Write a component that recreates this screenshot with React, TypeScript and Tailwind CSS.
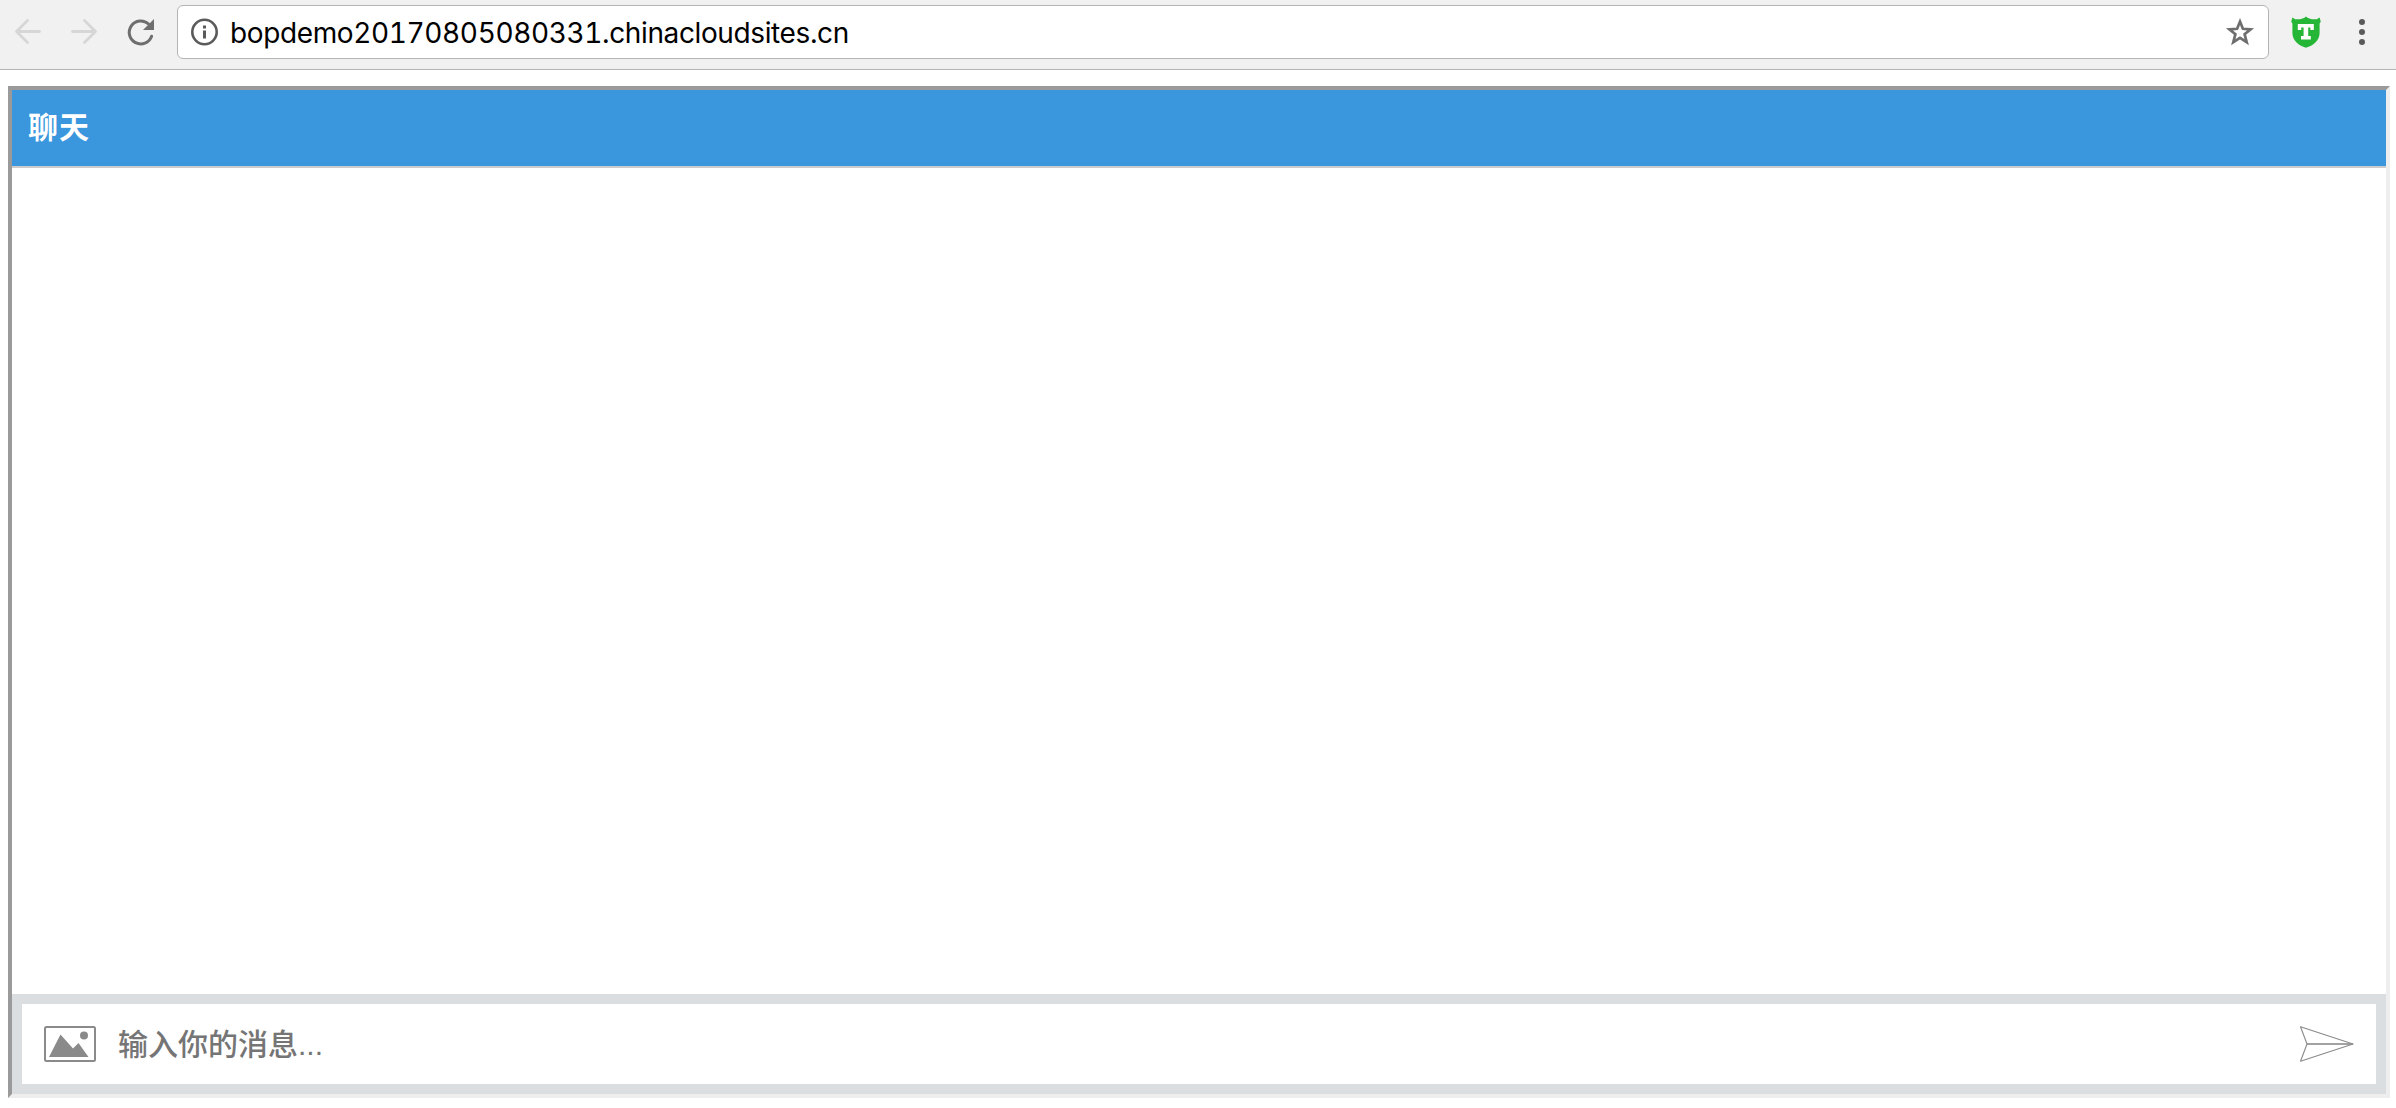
import { useState } from 'react';

const HOST = 'bopdemo20170805080331.chinacloudsites.cn';

export default function App() {
  return (
    <div className="flex h-[1108px] w-[2396px] flex-col overflow-hidden bg-white">
      <BrowserBar />
      <div className="flex flex-1 pt-4 pr-1.5 pb-2.5 pl-2">
        <ChatFrame />
      </div>
    </div>
  );
}

function BrowserBar() {
  return (
    <div className="flex h-[70px] shrink-0 items-start border-b border-[#b4b4b4] bg-[#f1f1f1]">
      <div className="flex w-[177px] shrink-0 pt-[17px] pl-[13px]">
        <ArrowIcon />
        <ArrowIcon className="ml-[30px] -scale-x-100" />
        <ReloadIcon />
      </div>

      {/* Address field */}
      <div className="mt-[5px] flex h-[54px] w-[2092px] items-center rounded-[6px] border border-[#b4b4b4] bg-white pr-[13px] pl-[13px]">
        <InfoIcon />
        <span className="ml-[11px] pt-0.5 font-['Inter',sans-serif] text-[28px] leading-[34px] tracking-[-0.38px] whitespace-nowrap text-black tabular-nums">
          {HOST}
        </span>
        <StarIcon />
      </div>

      <ShieldIcon />
      <svg className="mt-[17px] ml-[35px] h-[30px] w-3" viewBox="0 0 12 30" fill="#5a5a5a">
        <circle cx="6" cy="5" r="3" />
        <circle cx="6" cy="15" r="3" />
        <circle cx="6" cy="25" r="3" />
      </svg>
    </div>
  );
}

function ChatFrame() {
  const [message, setMessage] = useState('');

  return (
    <div className="flex flex-1 flex-col border-4 border-t-[#9a9a9a] border-r-[#eeeeee] border-b-[#eeeeee] border-l-[#9a9a9a] font-['Liberation_Sans','Noto_Sans_CJK_SC',sans-serif]">
      <header className="flex h-[78px] shrink-0 items-center border-b-2 border-[#cccccc] bg-[#3a96dd] pl-4">
        <h1 className="text-[30px] leading-[40px] font-bold tracking-[1px] text-white">聊天</h1>
      </header>

      {/* Message history */}
      <main className="flex-1 bg-white" />

      <footer className="flex h-[100px] shrink-0 items-center border-[10px] border-[#dbdee1] bg-white pr-[21px] pl-[22px]">
        <ImageIcon />
        <input
          className="ml-[22px] h-[60px] flex-1 bg-transparent pt-0.5 text-[30px] font-medium text-[#757575] outline-none placeholder:text-[#757575]"
          placeholder="输入你的消息..."
          value={message}
          onChange={(e) => setMessage(e.target.value)}
        />
        <SendIcon />
      </footer>
    </div>
  );
}

function ArrowIcon({ className = '' }: { className?: string }) {
  return (
    <svg
      className={`h-[30px] w-7 shrink-0 ${className}`}
      viewBox="0 0 28 30"
      fill="none"
      stroke="#d6d6d6"
      strokeWidth="2.8"
      strokeLinecap="round"
      strokeLinejoin="round"
    >
      <path d="M26.5 14.5H4M14.5 3.5L3.5 14.5L14.5 25.5" />
    </svg>
  );
}

function ReloadIcon() {
  return (
    <svg className="ml-[27px] h-[30px] w-[30px] shrink-0" viewBox="0 0 30 30">
      <path
        d="M25.6 19.2A11.5 11.5 0 1 1 22.6 7"
        fill="none"
        stroke="#6e6e6e"
        strokeWidth="3"
        strokeLinecap="round"
      />
      <path d="M28 2V13H17Z" fill="#6e6e6e" />
    </svg>
  );
}

function InfoIcon() {
  return (
    <svg className="h-7 w-7 shrink-0" viewBox="0 0 28 28">
      <circle cx="13.5" cy="14" r="12.2" fill="none" stroke="#5a5a5a" strokeWidth="2.6" />
      <path d="M12 7.5h3v3h-3zM12 12.5h3v8h-3z" fill="#5a5a5a" />
    </svg>
  );
}

function StarIcon() {
  return (
    <svg className="ml-auto h-[30px] w-[30px] shrink-0" viewBox="0 0 30 30">
      <path
        d="M15 4.6L17.9 11.8L25.6 12.3L19.6 17.2L21.7 25.2L15 20.8L8.3 25.2L10.4 17.2L4.4 12.3L12.1 11.8Z"
        fill="none"
        stroke="#6e6e6e"
        strokeWidth="2.7"
      />
    </svg>
  );
}

function ShieldIcon() {
  return (
    <svg className="mt-4 ml-[22px] h-8 w-[30px] shrink-0" viewBox="0 0 30 32">
      <path
        d="M15 .5C17 2.8 21 3.6 25.8 3.2L28.6 1.6L29.8 5.8L28.6 7.5V17C28.6 25 22 29.5 15 31.8C8 29.5 1.4 25 1.4 17V7.5L.2 5.8L1.4 1.6L4.2 3.2C9 3.6 13 2.8 15 .5Z"
        fill="#26b637"
      />
      <path d="M6.8 8H22.8V14H19.4V11.6H17.2V20H19.8V23.6H10V20H12.6V11.6H10.2V14H6.8Z" fill="#fff" />
    </svg>
  );
}

function ImageIcon() {
  return (
    <svg className="h-9 w-[52px] shrink-0" viewBox="0 0 52 36">
      <rect x="1" y="1" width="50" height="34" rx="1.5" fill="none" stroke="#8a8a8a" strokeWidth="2" />
      <path d="M5 31L16.5 8.5L29 22.5L34.5 17L44.5 31Z" fill="#8a8a8a" />
      <circle cx="40" cy="9.5" r="4" fill="#8a8a8a" />
    </svg>
  );
}

function SendIcon() {
  return (
    <svg
      className="h-9 w-14 shrink-0"
      viewBox="0 0 56 36"
      fill="none"
      stroke="#8a8a8a"
      strokeWidth="1.1"
      strokeLinejoin="round"
    >
      <path d="M1.5 .8L54 18L1.5 35.2L8 18Z" />
      <path d="M8 17.5H54M8 18.5H54" strokeWidth=".8" />
    </svg>
  );
}
